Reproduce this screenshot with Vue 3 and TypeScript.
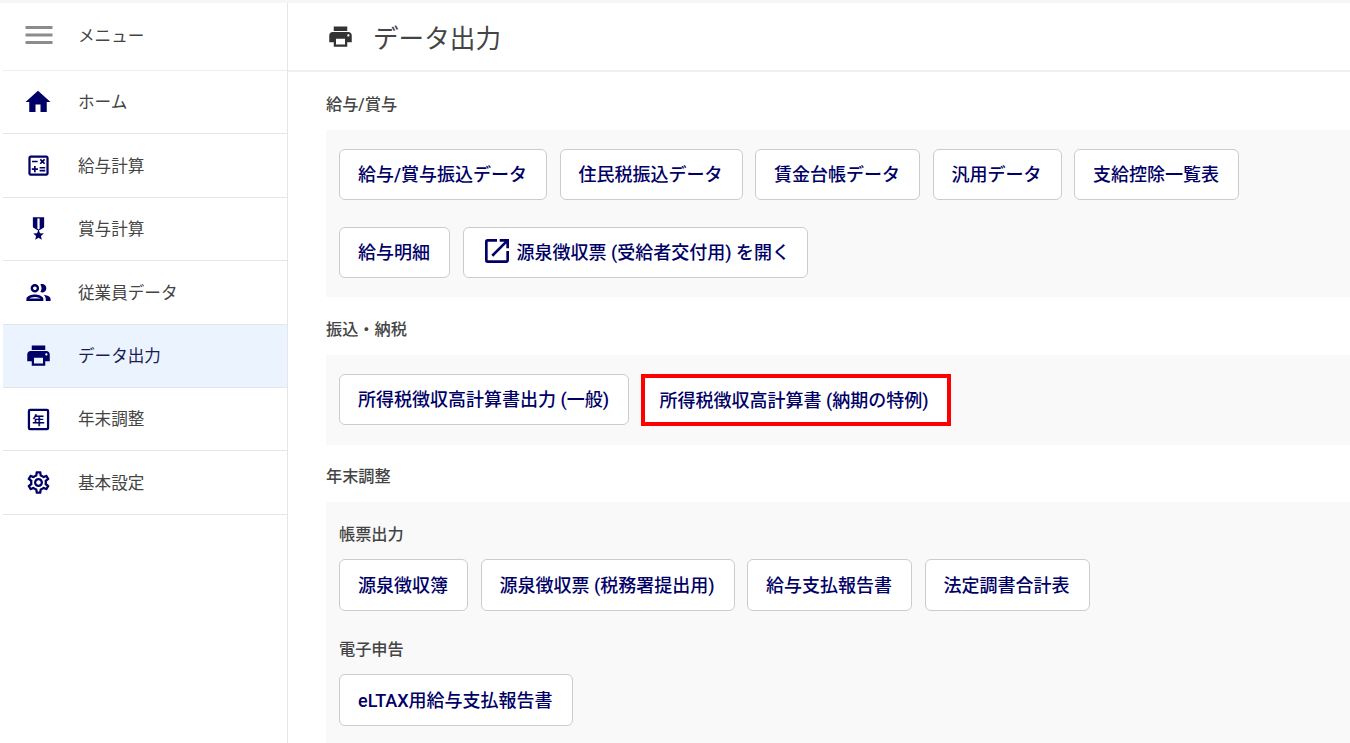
<template>
  <div class="page">
    <aside class="sidebar">
      <div class="side-row menu-row">
        <svg class="menu-icon" viewBox="0 0 24 24"><path d="M3 18h18v-2H3v2zm0-5h18v-2H3v2zm0-7v2h18V6H3z" /></svg>
        <span>メニュー</span>
      </div>
      <div v-for="item in navItems" :key="item.label" class="side-row" :class="{ active: item.active }">
        <span class="icon-box">
          <svg class="side-icon" :class="item.size" viewBox="0 0 24 24">
            <path v-if="item.icon" :d="item.icon" />
            <template v-else>
              <rect x="3.5" y="3.5" width="17" height="17" rx="1" fill="none" stroke="#000066" stroke-width="2" />
              <text x="12" y="16.5" text-anchor="middle" class="nen">年</text>
            </template>
          </svg>
        </span>
        <span class="side-label">{{ item.label }}</span>
      </div>
    </aside>

    <main class="content">
      <header class="title-bar">
        <svg class="title-icon" viewBox="0 0 24 24"><path :d="printIcon" /></svg>
        <h1>データ出力</h1>
      </header>

      <div class="body">
        <h2>給与/賞与</h2>
        <section class="panel">
          <div class="btn-row">
            <button v-for="b in payroll" :key="b">{{ b }}</button>
          </div>
          <div class="btn-row">
            <button>給与明細</button>
            <button class="with-icon">
              <svg viewBox="0 0 24 24"><path d="M19 19H5V5h7V3H5a2 2 0 0 0-2 2v14a2 2 0 0 0 2 2h14c1.1 0 2-.9 2-2v-7h-2v7zM14 3v2h3.59l-9.83 9.83 1.41 1.41L19 6.41V10h2V3h-7z" /></svg>
              源泉徴収票 (受給者交付用) を開く
            </button>
          </div>
        </section>

        <h2>振込・納税</h2>
        <section class="panel">
          <div class="btn-row">
            <button>所得税徴収高計算書出力 (一般)</button>
            <button class="marked">所得税徴収高計算書 (納期の特例)</button>
          </div>
        </section>

        <h2>年末調整</h2>
        <section class="panel last">
          <h3>帳票出力</h3>
          <div class="btn-row tight">
            <button v-for="b in forms" :key="b">{{ b }}</button>
          </div>
          <h3>電子申告</h3>
          <div class="btn-row tight">
            <button>eLTAX用給与支払報告書</button>
          </div>
        </section>
      </div>
    </main>
  </div>
</template>

<script setup lang="ts">
const printIcon =
  'M19 8H5c-1.66 0-3 1.34-3 3v6h4v4h12v-4h4v-6c0-1.66-1.34-3-3-3zm-3 11H8v-5h8v5zm3-7c-.55 0-1-.45-1-1s.45-1 1-1 1 .45 1 1-.45 1-1 1zm-1-9H6v4h12V3z'

interface NavItem {
  label: string
  icon: string
  size: string
  active?: boolean
}

const navItems: NavItem[] = [
  { label: 'ホーム', size: 'large', icon: 'M10 20v-6h4v6h5v-8h3L12 3 2 12h3v8z' },
  {
    label: '給与計算',
    size: 'mid',
    icon: 'M19 3H5c-1.1 0-2 .9-2 2v14c0 1.1.9 2 2 2h14c1.1 0 2-.9 2-2V5c0-1.1-.9-2-2-2zm0 16H5V5h14v14zM6.25 7.72h5v1.5h-5zM13 15.75h5v1.5h-5zm0-2.5h5v1.5h-5zM8 18h1.5v-2h2v-1.5h-2v-2H8v2H6V16h2zm6.09-7.05 1.41-1.41 1.41 1.41 1.06-1.06-1.41-1.42 1.41-1.41L16.91 6 15.5 7.41 14.09 6l-1.06 1.06 1.41 1.41-1.41 1.42z',
  },
  {
    label: '賞与計算',
    size: 'mid',
    icon: 'M17 10.43V2H7v8.43c0 .35.18.68.49.86l4.18 2.51-.99 2.34-3.41.29 2.59 2.24L9.07 22 12 20.23 14.93 22l-.78-3.33 2.59-2.24-3.41-.29-.99-2.34 4.18-2.51c.3-.18.48-.5.48-.86zm-4 1.8-1 .6-1-.6V3h2v9.23z',
  },
  {
    label: '従業員データ',
    size: 'people',
    icon: 'M9 13.75c-2.34 0-7 1.17-7 3.5V19h14v-1.75c0-2.33-4.66-3.5-7-3.5zM4.34 17c.84-.58 2.87-1.25 4.66-1.25s3.82.67 4.66 1.25H4.34zM9 12c1.93 0 3.5-1.57 3.5-3.5S10.93 5 9 5 5.5 6.57 5.5 8.5 7.07 12 9 12zm0-5c.83 0 1.5.67 1.5 1.5S9.83 10 9 10s-1.5-.67-1.5-1.5S8.17 7 9 7zm7.04 6.81c1.16.84 1.96 1.96 1.96 3.44V19h4v-1.75c0-2.02-3.5-3.17-5.96-3.44zM15 12c1.93 0 3.5-1.57 3.5-3.5S16.93 5 15 5c-.54 0-1.04.13-1.5.35.63.89 1 1.98 1 3.15s-.37 2.26-1 3.15c.46.22.96.35 1.5.35z',
  },
  { label: 'データ出力', size: 'mid', icon: printIcon, active: true },
  { label: '年末調整', size: 'mid', icon: '' },
  {
    label: '基本設定',
    size: 'mid',
    icon: 'M19.43 12.98c.04-.32.07-.64.07-.98 0-.34-.03-.66-.07-.98l2.11-1.65c.19-.15.24-.42.12-.64l-2-3.46c-.09-.16-.26-.25-.44-.25-.06 0-.12.01-.17.03l-2.49 1c-.52-.4-1.08-.73-1.69-.98l-.38-2.65C14.46 2.18 14.25 2 14 2h-4c-.25 0-.46.18-.49.42l-.38 2.65c-.61.25-1.17.59-1.69.98l-2.49-1c-.06-.02-.12-.03-.18-.03-.17 0-.34.09-.43.25l-2 3.46c-.13.22-.07.49.12.64l2.11 1.65c-.04.32-.07.65-.07.98 0 .33.03.66.07.98l-2.11 1.65c-.19.15-.24.42-.12.64l2 3.46c.09.16.26.25.44.25.06 0 .12-.01.17-.03l2.49-1c.52.4 1.08.73 1.69.98l.38 2.65c.03.24.24.42.49.42h4c.25 0 .46-.18.49-.42l.38-2.65c.61-.25 1.17-.59 1.69-.98l2.49 1c.06.02.12.03.18.03.17 0 .34-.09.43-.25l2-3.46c.12-.22.07-.49-.12-.64l-2.11-1.65zm-1.98-1.71c.04.31.05.52.05.73 0 .21-.02.43-.05.73l-.14 1.13.89.7 1.08.84-.7 1.21-1.27-.51-1.04-.42-.9.68c-.43.32-.84.56-1.25.73l-1.06.43-.16 1.13-.2 1.35h-1.4l-.19-1.35-.16-1.13-1.06-.43c-.43-.18-.83-.41-1.23-.71l-.91-.7-1.06.43-1.27.51-.7-1.21 1.08-.84.89-.7-.14-1.13c-.03-.31-.05-.54-.05-.74s.02-.43.05-.73l.14-1.13-.89-.7-1.08-.84.7-1.21 1.27.51 1.04.42.9-.68c.43-.32.84-.56 1.25-.73l1.06-.43.16-1.13.2-1.35h1.39l.19 1.35.16 1.13 1.06.43c.43.18.83.41 1.23.71l.91.7 1.06-.43 1.27-.51.7 1.21-1.07.85-.89.7.14 1.13zM12 8c-2.21 0-4 1.79-4 4s1.79 4 4 4 4-1.79 4-4-1.79-4-4-4zm0 6c-1.1 0-2-.9-2-2s.9-2 2-2 2 .9 2 2-.9 2-2 2z',
  },
]

const payroll = ['給与/賞与振込データ', '住民税振込データ', '賃金台帳データ', '汎用データ', '支給控除一覧表']
const forms = ['源泉徴収簿', '源泉徴収票 (税務署提出用)', '給与支払報告書', '法定調書合計表']
</script>

<style>
html,
body {
  margin: 0;
  background: #fff;
}
</style>

<style scoped>
.page {
  display: flex;
  height: 743px;
  overflow: hidden;
  padding-top: 3px;
  box-sizing: border-box;
  background: #fff;
  font-family: "Roboto", "Noto Sans CJK JP", sans-serif;
  box-shadow: inset 0 3px 0 #f6f6f6;
}

.sidebar {
  width: 284px;
  margin-left: 3px;
  flex-shrink: 0;
  border-right: 1px solid #e6e6e6;
}

.side-row {
  display: flex;
  align-items: center;
  height: 62.4px;
  padding-left: 23px;
  border-bottom: 1px solid #e6e6e6;
  font-size: 16.6px;
  color: #444;
}

.side-label {
  margin-top: -1.5px;
}

.menu-row {
  box-sizing: border-box;
  height: 68px;
  padding-bottom: 3px;
  border-bottom: 1px solid #eee;
}

.active {
  background: #ebf3fe;
  color: #1c1c50;
}

.icon-box {
  display: flex;
  justify-content: center;
  width: 24px;
  margin-right: 28px;
  flex-shrink: 0;
}

.side-icon {
  width: 27px;
  height: 27px;
  fill: #000066;
  flex-shrink: 0;
}

.side-icon.large {
  width: 30px;
  height: 30px;
}

.side-icon.people {
  width: 29px;
  height: 29px;
}

.menu-icon {
  width: 36px;
  height: 36px;
  margin: 0 21px 0 -5px;
  fill: #8c8c8c;
  flex-shrink: 0;
}

.nen {
  font-size: 11px;
  font-weight: 700;
  fill: #000066;
}

.content {
  flex: 1;
  min-width: 0;
}

.title-bar {
  display: flex;
  align-items: center;
  height: 67px;
  padding-left: 39px;
  border-bottom: 2px solid #f0f0f0;
}

.title-icon {
  width: 27px;
  height: 27px;
  margin-right: 19px;
  fill: #333;
}

h1 {
  margin: 0;
  font-size: 25.6px;
  font-weight: 400;
  color: #444;
}

.body {
  padding-left: 38px;
}

h2 {
  margin: 0;
  height: 57.5px;
  padding-top: 4px;
  box-sizing: border-box;
  display: flex;
  align-items: center;
  font-size: 16.2px;
  font-weight: 500;
  color: #444;
}

.panel {
  padding: 19px 13px;
  background: #f9f9f9;
}

.panel.last {
  padding-top: 20px;
}

h3 {
  margin: 0 0 11px;
  font-size: 16.2px;
  line-height: 26px;
  font-weight: 500;
  color: #444;
}

.btn-row {
  display: flex;
  gap: 12.5px;
}

.btn-row + .btn-row {
  margin-top: 26.5px;
}

.btn-row.tight + h3 {
  margin-top: 26.5px;
}

button {
  display: flex;
  align-items: center;
  height: 51.5px;
  padding: 0 19px 2px 18px;
  background: #fff;
  border: 1px solid #ccc;
  border-radius: 6px;
  font-family: inherit;
  font-size: 18px;
  font-weight: 500;
  color: #000066;
  white-space: nowrap;
}

button.marked {
  margin-left: -1px;
  border: 4px solid #f00;
  border-radius: 0;
  height: 52px;
  padding: 0 18px 2px 15px;
}

button.with-icon {
  padding-right: 17.5px;
}

.with-icon svg {
  width: 32px;
  height: 32px;
  margin-right: 4px;
  margin-left: -1px;
  fill: #000066;
}
</style>
